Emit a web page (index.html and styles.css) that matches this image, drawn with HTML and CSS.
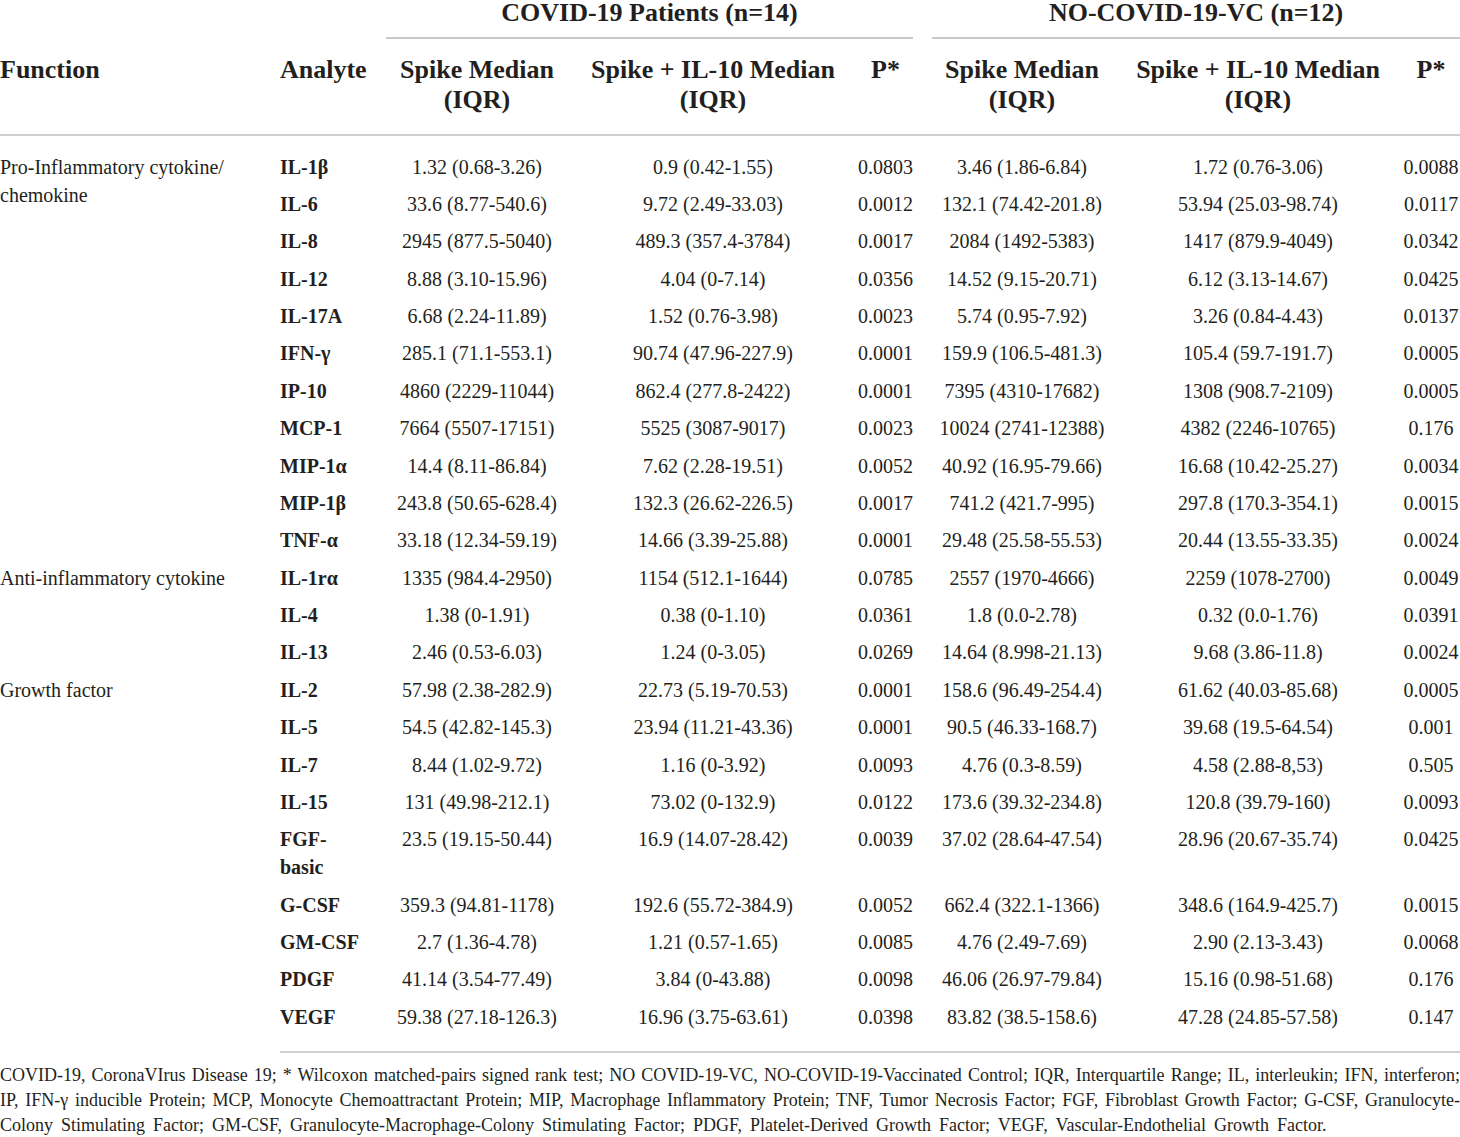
FILE: index.html
```html
<!DOCTYPE html>
<html lang="en">
<head>
<meta charset="utf-8">
<title>Cytokine table</title>
<link rel="stylesheet" href="styles.css">
</head>
<body>
<div class="wrap">
<table class="data">
  <colgroup>
    <col class="c-func"><col class="c-an"><col class="c-s1"><col class="c-i1"><col class="c-p1"><col class="c-s2"><col class="c-i2"><col class="c-p2">
  </colgroup>
  <thead>
    <tr class="group-row">
      <th></th><th></th>
      <th colspan="3" class="grp grp1"><span class="grp-title">COVID-19 Patients (n=14)</span></th>
      <th colspan="3" class="grp grp2"><span class="grp-title">NO-COVID-19-VC (n=12)</span></th>
    </tr>
    <tr class="head-row">
      <th class="left">Function</th>
      <th class="left an">Analyte</th>
      <th>Spike Median (IQR)</th>
      <th>Spike + IL-10 Median (IQR)</th>
      <th>P*</th>
      <th>Spike Median (IQR)</th>
      <th>Spike + IL-10 Median (IQR)</th>
      <th class="p2">P*</th>
    </tr>
  </thead>
  <tbody>
    <tr class="first"><td class="func" rowspan="11">Pro-Inflammatory cytokine/ chemokine</td><td class="an">IL-1β</td><td>1.32 (0.68-3.26)</td><td>0.9 (0.42-1.55)</td><td>0.0803</td><td>3.46 (1.86-6.84)</td><td>1.72 (0.76-3.06)</td><td class="p2">0.0088</td></tr>
    <tr><td class="an">IL-6</td><td>33.6 (8.77-540.6)</td><td>9.72 (2.49-33.03)</td><td>0.0012</td><td>132.1 (74.42-201.8)</td><td>53.94 (25.03-98.74)</td><td class="p2">0.0117</td></tr>
    <tr><td class="an">IL-8</td><td>2945 (877.5-5040)</td><td>489.3 (357.4-3784)</td><td>0.0017</td><td>2084 (1492-5383)</td><td>1417 (879.9-4049)</td><td class="p2">0.0342</td></tr>
    <tr><td class="an">IL-12</td><td>8.88 (3.10-15.96)</td><td>4.04 (0-7.14)</td><td>0.0356</td><td>14.52 (9.15-20.71)</td><td>6.12 (3.13-14.67)</td><td class="p2">0.0425</td></tr>
    <tr><td class="an">IL-17A</td><td>6.68 (2.24-11.89)</td><td>1.52 (0.76-3.98)</td><td>0.0023</td><td>5.74 (0.95-7.92)</td><td>3.26 (0.84-4.43)</td><td class="p2">0.0137</td></tr>
    <tr><td class="an">IFN-γ</td><td>285.1 (71.1-553.1)</td><td>90.74 (47.96-227.9)</td><td>0.0001</td><td>159.9 (106.5-481.3)</td><td>105.4 (59.7-191.7)</td><td class="p2">0.0005</td></tr>
    <tr><td class="an">IP-10</td><td>4860 (2229-11044)</td><td>862.4 (277.8-2422)</td><td>0.0001</td><td>7395 (4310-17682)</td><td>1308 (908.7-2109)</td><td class="p2">0.0005</td></tr>
    <tr><td class="an">MCP-1</td><td>7664 (5507-17151)</td><td>5525 (3087-9017)</td><td>0.0023</td><td>10024 (2741-12388)</td><td>4382 (2246-10765)</td><td class="p2">0.176</td></tr>
    <tr><td class="an">MIP-1α</td><td>14.4 (8.11-86.84)</td><td>7.62 (2.28-19.51)</td><td>0.0052</td><td>40.92 (16.95-79.66)</td><td>16.68 (10.42-25.27)</td><td class="p2">0.0034</td></tr>
    <tr><td class="an">MIP-1β</td><td>243.8 (50.65-628.4)</td><td>132.3 (26.62-226.5)</td><td>0.0017</td><td>741.2 (421.7-995)</td><td>297.8 (170.3-354.1)</td><td class="p2">0.0015</td></tr>
    <tr><td class="an">TNF-α</td><td>33.18 (12.34-59.19)</td><td>14.66 (3.39-25.88)</td><td>0.0001</td><td>29.48 (25.58-55.53)</td><td>20.44 (13.55-33.35)</td><td class="p2">0.0024</td></tr>
    <tr><td class="func" rowspan="3">Anti-inflammatory cytokine</td><td class="an">IL-1rα</td><td>1335 (984.4-2950)</td><td>1154 (512.1-1644)</td><td>0.0785</td><td>2557 (1970-4666)</td><td>2259 (1078-2700)</td><td class="p2">0.0049</td></tr>
    <tr><td class="an">IL-4</td><td>1.38 (0-1.91)</td><td>0.38 (0-1.10)</td><td>0.0361</td><td>1.8 (0.0-2.78)</td><td>0.32 (0.0-1.76)</td><td class="p2">0.0391</td></tr>
    <tr><td class="an">IL-13</td><td>2.46 (0.53-6.03)</td><td>1.24 (0-3.05)</td><td>0.0269</td><td>14.64 (8.998-21.13)</td><td>9.68 (3.86-11.8)</td><td class="p2">0.0024</td></tr>
    <tr><td class="func" rowspan="9">Growth factor</td><td class="an">IL-2</td><td>57.98 (2.38-282.9)</td><td>22.73 (5.19-70.53)</td><td>0.0001</td><td>158.6 (96.49-254.4)</td><td>61.62 (40.03-85.68)</td><td class="p2">0.0005</td></tr>
    <tr><td class="an">IL-5</td><td>54.5 (42.82-145.3)</td><td>23.94 (11.21-43.36)</td><td>0.0001</td><td>90.5 (46.33-168.7)</td><td>39.68 (19.5-64.54)</td><td class="p2">0.001</td></tr>
    <tr><td class="an">IL-7</td><td>8.44 (1.02-9.72)</td><td>1.16 (0-3.92)</td><td>0.0093</td><td>4.76 (0.3-8.59)</td><td>4.58 (2.88-8,53)</td><td class="p2">0.505</td></tr>
    <tr><td class="an">IL-15</td><td>131 (49.98-212.1)</td><td>73.02 (0-132.9)</td><td>0.0122</td><td>173.6 (39.32-234.8)</td><td>120.8 (39.79-160)</td><td class="p2">0.0093</td></tr>
    <tr><td class="an">FGF-basic</td><td>23.5 (19.15-50.44)</td><td>16.9 (14.07-28.42)</td><td>0.0039</td><td>37.02 (28.64-47.54)</td><td>28.96 (20.67-35.74)</td><td class="p2">0.0425</td></tr>
    <tr><td class="an">G-CSF</td><td>359.3 (94.81-1178)</td><td>192.6 (55.72-384.9)</td><td>0.0052</td><td>662.4 (322.1-1366)</td><td>348.6 (164.9-425.7)</td><td class="p2">0.0015</td></tr>
    <tr><td class="an">GM-CSF</td><td>2.7 (1.36-4.78)</td><td>1.21 (0.57-1.65)</td><td>0.0085</td><td>4.76 (2.49-7.69)</td><td>2.90 (2.13-3.43)</td><td class="p2">0.0068</td></tr>
    <tr><td class="an">PDGF</td><td>41.14 (3.54-77.49)</td><td>3.84 (0-43.88)</td><td>0.0098</td><td>46.06 (26.97-79.84)</td><td>15.16 (0.98-51.68)</td><td class="p2">0.176</td></tr>
    <tr class="last"><td class="an">VEGF</td><td>59.38 (27.18-126.3)</td><td>16.96 (3.75-63.61)</td><td>0.0398</td><td>83.82 (38.5-158.6)</td><td>47.28 (24.85-57.58)</td><td class="p2">0.147</td></tr>
  </tbody>
</table>
<div class="notes">
  <span class="nl just">COVID-19, CoronaVIrus Disease 19; * Wilcoxon matched-pairs signed rank test; NO COVID-19-VC, NO-COVID-19-Vaccinated Control; IQR, Interquartile Range; IL, interleukin; IFN, interferon;</span>
  <span class="nl just">IP, IFN-γ inducible Protein; MCP, Monocyte Chemoattractant Protein; MIP, Macrophage Inflammatory Protein; TNF, Tumor Necrosis Factor; FGF, Fibroblast Growth Factor; G-CSF, Granulocyte-</span>
  <span class="nl wide">Colony Stimulating Factor; GM-CSF, Granulocyte-Macrophage-Colony Stimulating Factor; PDGF, Platelet-Derived Growth Factor; VEGF, Vascular-Endothelial Growth Factor.</span>
</div>
</div>
</body>
</html>
```

FILE: styles.css
```css
html, body {
  margin: 0;
  padding: 0;
  background: #ffffff;
}
body {
  font-family: "Liberation Serif", "Times New Roman", serif;
  color: #231f20;
}
.wrap {
  width: 1460px;
}
.data {
  width: 1460px;
  table-layout: fixed;
  border-collapse: collapse;
  border-spacing: 0;
}
.c-func { width: 280px; }
.c-an { width: 106px; }
.c-s1 { width: 182px; }
.c-i1 { width: 290px; }
.c-p1 { width: 55px; }
.c-s2 { width: 218px; }
.c-i2 { width: 254px; }
.c-p2 { width: 75px; }

.data th, .data td {
  padding: 0;
  text-align: center;
  vertical-align: top;
}
.data th.left, .data td.func, .data td.an {
  text-align: left;
}

/* group row */
.group-row th {
  font-size: 26px;
  font-weight: bold;
  line-height: 26px;
  padding-bottom: 0;
}
.grp-title {
  display: block;
  padding-bottom: 11px;
  border-bottom: 2px solid #c8c8c8;
}
.grp2 {
  padding-left: 19px !important;
}

/* head row */
.head-row th {
  font-size: 26px;
  font-weight: bold;
  line-height: 30px;
  padding-top: 16px;
  padding-bottom: 19px;
  border-bottom: 2px solid #cfcfcf;
}

/* body */
.data td {
  font-size: 20px;
  line-height: 28px;
  padding-top: 4.7px;
  padding-bottom: 4.7px;
}
.data td.an {
  font-weight: bold;
  padding-right: 24px;
}
.data td.p2, .data th.p2 {
  padding-left: 17px;
}
.data tr.first td {
  padding-top: 16.5px;
}
.data tr.last td {
  padding-bottom: 20px;
  border-bottom: 2px solid #cfcfcf;
}
.data td.func {
  padding-right: 14px;
}

/* notes */
.notes {
  padding-top: 10px;
  font-size: 18px;
  line-height: 25px;
}
.nl {
  display: block;
  white-space: nowrap;
}
.nl.just {
  white-space: normal;
  text-align: justify;
  text-align-last: justify;
}
.nl.wide {
  word-spacing: 3.5px;
}
```
